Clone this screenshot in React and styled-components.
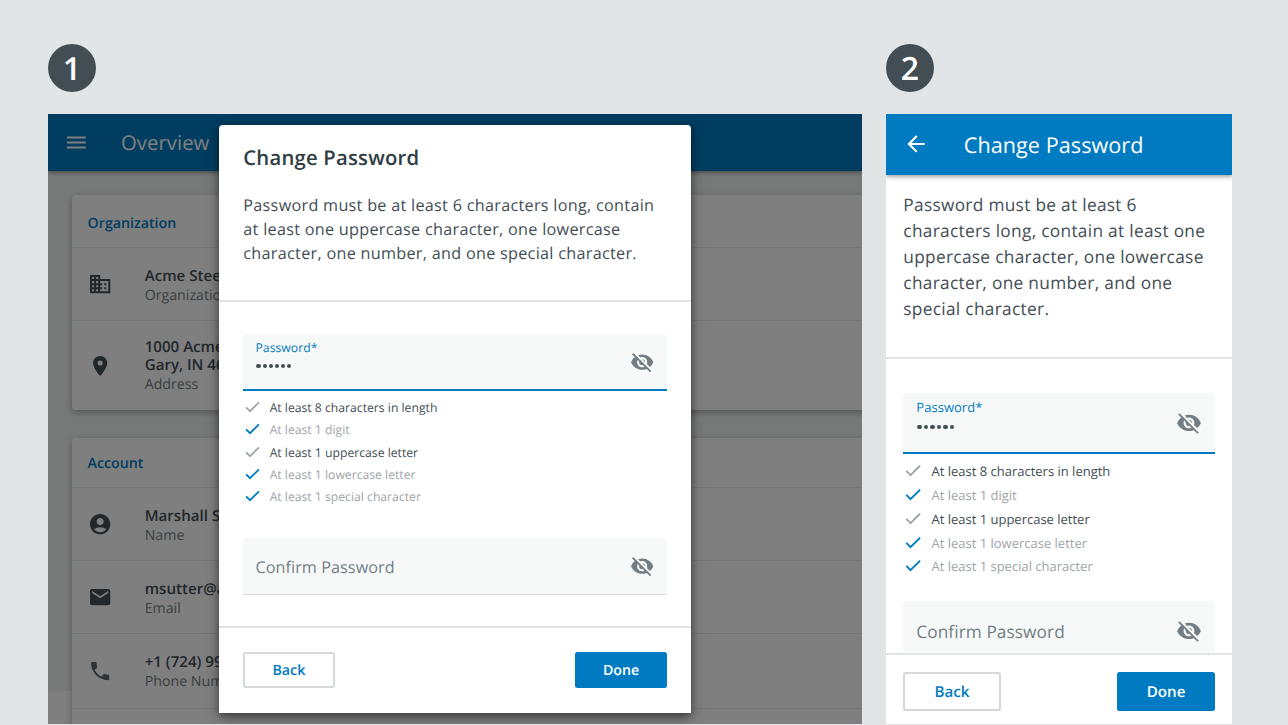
import React from "react";
import styled, { createGlobalStyle, css } from "styled-components";
import {
  MdAccountCircle,
  MdArrowBack,
  MdBusiness,
  MdEmail,
  MdPhone,
  MdPlace,
  MdVisibilityOff,
} from "react-icons/md";

const blue = "#007bc1";
const ink = "#424e54";
const grey = "#727e84";

const GlobalStyle = createGlobalStyle`
  *, *::before, *::after { box-sizing: border-box; }
  body {
    margin: 0;
    overflow: hidden;
    background: #e1e5e6;
    color: ${ink};
    font-family: "Open Sans", sans-serif;
    text-rendering: geometricPrecision;
  }
  h1, h2, p, ul { margin: 0; padding: 0; font-weight: inherit; }
  button { font-family: inherit; text-rendering: inherit; }
`;

const u = (n) => `calc(var(--u) * ${n})`;

const Page = styled.main`
  display: flex;
  gap: 24px;
  width: 1288px;
  height: 725px;
  padding: 44px 0 1px 48px;
`;

const Figure = styled.section`
  display: flex;
  flex-direction: column;
  gap: 22px;
  width: ${(p) => p.$width}px;
`;

const StepBadge = styled.div`
  display: grid;
  place-items: center;
  width: 48px;
  height: 48px;
  padding-top: 2px;
  border-radius: 50%;
  background: ${ink};
  color: #fff;
  font-size: 32px;
  font-weight: 600;
  line-height: 46px;
`;

const Screen = styled.div`
  --u: ${(p) => p.$unit}px;
  position: relative;
  display: flex;
  flex-direction: column;
  height: 610px;
  overflow: hidden;
  background: #fff;
`;

const AppBar = styled.header`
  position: relative;
  z-index: 1;
  display: flex;
  flex: none;
  align-items: center;
  height: ${u(56)};
  padding-left: ${u(16)};
  background: ${blue};
  color: #fff;
  box-shadow: 0 2px 4px rgba(0, 0, 0, 0.35);

  svg {
    width: ${u(24)};
    height: ${u(24)};
  }
`;

const BarTitle = styled.h1`
  margin-left: ${(p) => p.$gap}px;
  padding-top: ${(p) => p.$top}px;
  font-size: ${u(20)};
  line-height: ${u(28)};
  letter-spacing: 0.05px;
`;

const Overview = styled.div`
  display: flex;
  flex-direction: column;
  flex: none;
  gap: 28px;
  height: 520px;
  padding: 24.7px 0 0 23.5px;
  background: #eff2f1;
`;

const Card = styled.section`
  flex: none;
  width: 830px;
  border-radius: 4px;
  background: #fff;
  box-shadow: 0 3px 6px rgba(0, 0, 0, 0.22), 0 1px 8px rgba(0, 0, 0, 0.1);
`;

const CardTitle = styled.h2`
  display: flex;
  align-items: center;
  height: ${(p) => p.$height}px;
  padding: ${(p) => p.$top}px 0 0 16.1px;
  color: ${blue};
  font-size: 14.2px;
  font-weight: 600;
`;

const InfoRow = styled.div`
  display: flex;
  align-items: center;
  height: ${(p) => p.$height}px;
  border-top: 1.5px solid #e8eaea;
  padding-left: 16.5px;
`;

const InfoIcon = styled.div`
  display: flex;
  width: 56.7px;
  color: ${(p) => (p.$soft ? "#5c676c" : ink)};

  svg {
    width: 24.3px;
    height: 24.3px;
  }
`;

const InfoText = styled.div`
  padding-top: ${(p) => p.$top}px;
  color: ${ink};
  font-size: 15.1px;
  font-weight: 600;
  line-height: 18px;
  white-space: pre;
`;

const InfoLabel = styled.p`
  margin-top: 1.4px;
  color: ${grey};
  font-size: 14.2px;
  font-weight: 400;
  line-height: 20px;
`;

const Scrim = styled.div`
  position: absolute;
  inset: 0;
  z-index: 2;
  background: rgba(0, 0, 0, 0.5);
`;

const Dialog = styled.div`
  position: absolute;
  z-index: 3;
  top: 11px;
  left: 171px;
  display: flex;
  flex-direction: column;
  width: 472px;
  height: 588px;
  border-radius: 4px;
  background: #fff;
  box-shadow: 0 3px 8px rgba(0, 0, 0, 0.45), 0 6px 16px rgba(0, 0, 0, 0.2);
`;

const DialogTitle = styled.h2`
  padding: 18px 24.3px 0;
  color: #303d43;
  font-size: 20.27px;
  font-weight: 600;
  letter-spacing: 0.22px;
  line-height: 28px;
`;

const Intro = styled.p`
  flex: none;
  height: ${(p) => p.$height}px;
  padding: ${(p) => p.$top}px ${(p) => p.$side}px 0;
  border-bottom: 2px solid #e1e3e4;
  font-size: ${u(16)};
  line-height: ${u(24)};
  letter-spacing: ${u(0.28)};
  white-space: pre;
`;

const Form = styled.div`
  display: flex;
  flex: 1;
  flex-direction: column;
  min-height: 0;
  overflow: hidden;
  padding: ${u(32)} ${(p) => p.$side}px 0;
`;

const FieldBox = styled.div`
  display: flex;
  flex: none;
  align-items: center;
  justify-content: space-between;
  height: ${u(56)};
  padding: 1px ${u(12)} 0;
  border-bottom: 1px solid #d5d9db;
  border-radius: 4px 4px 0 0;
  background: #f7f9f8;
  color: ${grey};
  font-size: ${u(16)};
  letter-spacing: ${u(0.06)};

  ${(p) =>
    p.$active &&
    css`
      border-bottom: 2px solid ${blue};
    `}

  svg {
    width: ${u(24)};
    height: ${u(24)};
  }
`;

const Placeholder = styled.span`
  padding-top: 1.8px;
`;

const FieldValue = styled.div`
  align-self: flex-start;
  padding-top: 4px;
`;

const FieldLabel = styled.div`
  color: ${blue};
  font-size: ${u(12)};
  line-height: ${u(17)};
`;

const Dots = styled.div`
  display: flex;
  gap: ${u(2)};
  padding: ${u(8)} 0 0 ${u(1)};

  i {
    width: ${u(4)};
    height: ${u(4)};
    border-radius: 50%;
    background: ${ink};
  }
`;

const Rules = styled.ul`
  flex: none;
  padding: ${(p) => p.$before}px 0 ${(p) => p.$after}px;
  list-style: none;
`;

const Rule = styled.li`
  display: flex;
  align-items: center;
  gap: ${u(7.5)};
  height: ${u(22)};
  color: ${(p) => (p.$met ? "#9ea5a9" : ink)};
  font-size: ${u(12.03)};

  svg {
    width: ${u(18.5)};
    height: ${u(18.5)};
    color: ${(p) => (p.$met ? blue : "#9ea5a9")};
  }
`;

const Actions = styled.footer`
  display: flex;
  flex: none;
  justify-content: space-between;
  align-items: flex-start;
  height: ${(p) => p.$height}px;
  padding: ${(p) => p.$top}px ${(p) => p.$side}px 0;
  border-top: 2px solid #e1e3e4;
  background: #fff;
`;

const Button = styled.button`
  width: ${u(90)};
  height: ${u(36)};
  padding: 1.5px 0 0;
  border: 2px solid ${(p) => (p.$primary ? blue : "#d5d9dd")};
  border-radius: 2.5px;
  background: ${(p) => (p.$primary ? blue : "#fff")};
  color: ${(p) => (p.$primary ? "#fff" : blue)};
  font-size: ${u(14)};
  font-weight: 600;
`;

const rules = [
  ["At least 8 characters in length", false],
  ["At least 1 digit", true],
  ["At least 1 uppercase letter", false],
  ["At least 1 lowercase letter", true],
  ["At least 1 special character", true],
];

function MenuIcon() {
  return (
    <svg viewBox="0 0 24 24" fill="currentColor" aria-hidden="true">
      <path d="M2.9 6.5h18.6v2H2.9zM2.9 11.4h18.6v2H2.9zM2.9 16.3h18.6v2H2.9z" />
    </svg>
  );
}

function CheckIcon() {
  return (
    <svg viewBox="0 0 24 24" fill="none" stroke="currentColor" strokeWidth="2.3" aria-hidden="true">
      <path d="M4 11.9l5 5L20.5 5.5" />
    </svg>
  );
}

function Info({ icon: Icon, text, label, height = 73, soft, top = 4 }) {
  return (
    <InfoRow $height={height}>
      <InfoIcon $soft={soft}>
        <Icon />
      </InfoIcon>
      <InfoText $top={top}>
        {text}
        <InfoLabel>{label}</InfoLabel>
      </InfoText>
    </InfoRow>
  );
}

function PasswordForm({ side, before, after }) {
  return (
    <Form $side={side}>
      <FieldBox $active>
        <FieldValue>
          <FieldLabel>Password*</FieldLabel>
          <Dots>
            {Array.from({ length: 6 }, (_, i) => (
              <i key={i} />
            ))}
          </Dots>
        </FieldValue>
        <MdVisibilityOff />
      </FieldBox>
      <Rules $before={before} $after={after}>
        {rules.map(([text, met]) => (
          <Rule key={text} $met={met}>
            <CheckIcon />
            {text}
          </Rule>
        ))}
      </Rules>
      <FieldBox>
        <Placeholder>Confirm Password</Placeholder>
        <MdVisibilityOff />
      </FieldBox>
    </Form>
  );
}

function FormActions(props) {
  return (
    <Actions {...props}>
      <Button>Back</Button>
      <Button $primary>Done</Button>
    </Actions>
  );
}

export default function App() {
  return (
    <Page>
      <GlobalStyle />
      <Figure $width={814}>
        <StepBadge>1</StepBadge>
        <Screen $unit={1.0137}>
          <AppBar>
            <MenuIcon />
            <BarTitle $gap={32.5} $top={0}>Overview</BarTitle>
          </AppBar>
          <Overview>
            <Card>
              <CardTitle $height={52} $top={3.6}>Organization</CardTitle>
              <Info icon={MdBusiness} text="Acme Steel Company" label="Organization Name" />
              <Info
                icon={MdPlace}
                text={"1000 Acme Street\nGary, IN 46402"}
                label="Address"
                height={89.5}
                top={1.4}
              />
            </Card>
            <Card>
              <CardTitle $height={49.5} $top={1.5}>Account</CardTitle>
              <Info icon={MdAccountCircle} text="Marshall Sutter" label="Name" />
              <Info icon={MdEmail} text="msutter@acme.com" label="Email" />
              <Info icon={MdPhone} text="+1 (724) 999-1234" label="Phone Number" height={74.5} soft top={3} />
              <InfoRow $height={73} />
            </Card>
          </Overview>
          <Scrim />
          <Dialog>
            <DialogTitle>Change Password</DialogTitle>
            <Intro $height={130.5} $top={21.5} $side={24.3}>
              {"Password must be at least 6 characters long, contain\nat least one uppercase character, one lowercase\ncharacter, one number, and one special character."}
            </Intro>
            <PasswordForm side={24.3} before={5.6} after={30} />
            <FormActions $height={87} $top={23.5} $side={24.3} />
          </Dialog>
        </Screen>
      </Figure>
      <Figure $width={346}>
        <StepBadge>2</StepBadge>
        <Screen $unit={1.08125}>
          <AppBar>
            <MdArrowBack />
            <BarTitle $gap={34.5} $top={3.6}>Change Password</BarTitle>
          </AppBar>
          <Intro $height={184} $top={18.8} $side={17.3}>
            {"Password must be at least 6\ncharacters long, contain at least one\nuppercase character, one lowercase\ncharacter, one number, and one\nspecial character."}
          </Intro>
          <PasswordForm side={17.3} before={5.6} after={23} />
          <FormActions $height={71} $top={17} $side={17.3} />
        </Screen>
      </Figure>
    </Page>
  );
}
